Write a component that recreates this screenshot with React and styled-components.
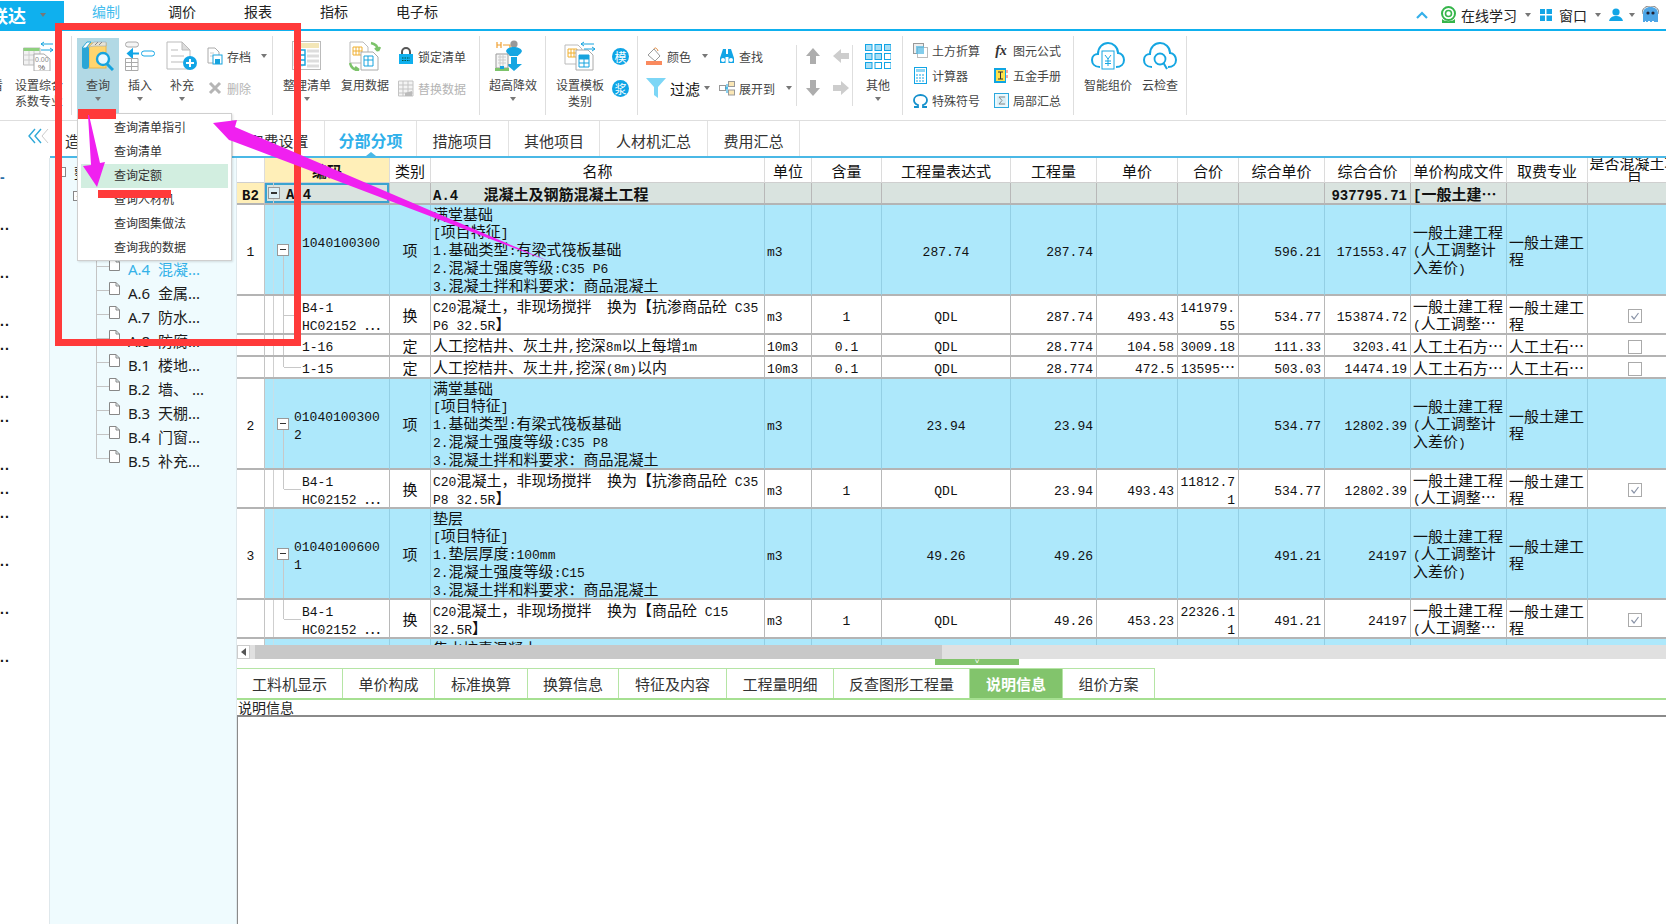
import React from "react";
import styled, { createGlobalStyle } from "styled-components";

const GlobalStyle = createGlobalStyle`
  html, body {
    margin: 0;
    padding: 0;
    background: #fff;
    overflow: hidden;
  }
  * { box-sizing: border-box; }
`;

const CJK = `"Noto Sans CJK SC", "Noto Sans", sans-serif`;
const MONO = `"Liberation Mono", "Noto Sans CJK SC", monospace`;

/* ---------- small drawings ---------- */

const QueryIcon = () => (
  <svg width="32" height="30" viewBox="0 0 32 30">
    <rect x="7" y="2" width="17" height="25" fill="#ffd56e" stroke="#eab64a" />
    <path d="M7 6 L12 1 H24 V5 H12 Z" fill="#e9e4d4" stroke="#9ab" strokeWidth=".6" />
    <path d="M13 4 L16 1 M17 4 L20 1" stroke="#888" />
    <rect x="0" y="5" width="7" height="23" rx="3" fill="#2ba6d6" />
    <path d="M0 7 L5 1 H9 L4 7 Z" fill="#fff" stroke="#2ba6d6" />
    <circle cx="21" cy="18" r="6" fill="#eaf8ff" stroke="#16a3de" strokeWidth="2.4" />
    <path d="M25 23 L31 29" stroke="#16a3de" strokeWidth="3" />
  </svg>
);

const InsertIcon = () => (
  <svg width="30" height="30" viewBox="0 0 30 30">
    <rect x=".5" y="1" width="13" height="5" rx="2.5" fill="#f4f4f4" stroke="#aaa" />
    <rect x="16.5" y="10" width="13" height="5" rx="2.5" fill="#fff" stroke="#19a8e6" />
    <path d="M14 12.5 H7 M7 9 L3 12.5 L7 16 Z" stroke="#12a5e6" strokeWidth="2" fill="#12a5e6" />
    <path d="M.5 17.5 H13 V29.5 H.5 Z M.5 21.5 H13 M.5 25.5 H13 M6.5 17.5 V29.5" fill="none" stroke="#aaa" />
  </svg>
);

const SupplementIcon = () => (
  <svg width="32" height="30" viewBox="0 0 32 30">
    <path d="M1 1 H16 L24 9 V28 H1 Z" fill="#fff" stroke="#bbb" />
    <path d="M16 1 V9 H24 Z" fill="#ddd" stroke="#bbb" />
    <path d="M5 9 H12 M5 15 H18 M5 21 H18" stroke="#ddd" strokeWidth="2" />
    <circle cx="24" cy="22" r="7" fill="#12a5e6" />
    <path d="M24 18 V26 M20 22 H28" stroke="#fff" strokeWidth="2" />
  </svg>
);

const SaveIcon = () => (
  <svg width="16" height="18" viewBox="0 0 16 18">
    <path d="M1 1 H8 L12 5 V16 H1 Z" fill="#fff" stroke="#aaa" />
    <path d="M3 6 H7 M3 9 H6" stroke="#ccc" />
    <rect x="6" y="8" width="9" height="9" fill="#fff" stroke="#16a3de" />
    <rect x="8" y="12" width="5" height="5" fill="#16a3de" />
  </svg>
);

const DeleteIcon = () => (
  <svg width="16" height="16" viewBox="0 0 16 16">
    <path d="M3 3 L13 13 M13 3 L3 13" stroke="#b5b5b5" strokeWidth="3" />
  </svg>
);

const RateIcon = () => (
  <svg width="32" height="30" viewBox="0 0 32 30">
    <path d="M.5 7 H17 V24 H.5 Z" fill="#f2f2f2" stroke="#bbb" />
    <rect x=".5" y="7" width="16" height="3" fill="#8ed07e" />
    <path d="M.5 14 H17 M.5 19 H17 M6 10 V24 M11 10 V24" stroke="#ccc" />
    <path d="M11 13 H21 L27 18 V30 H11 Z" fill="#fff" stroke="#aaa" />
    <text x="12" y="21" fontSize="7" fill="#888" fontFamily="Liberation Sans">0.00</text>
    <text x="15" y="29" fontSize="8" fill="#555" fontFamily="Liberation Sans">%</text>
    <path d="M18 3 H30 M18 3 L21 1 M18 3 L21 5 M18 9 H30 M30 9 L27 7 M30 9 L27 11" stroke="#16a3de" />
  </svg>
);

const OrganizeIcon = () => (
  <svg width="30" height="30" viewBox="0 0 30 30">
    <rect x=".5" y=".5" width="28" height="28" fill="#fff" stroke="#bbb" />
    <rect x="2" y="2" width="25" height="5" fill="#f3e6b7" />
    <path d="M2 9 H11 V25 H2 Z" fill="#fff" stroke="#ddd" />
    <path d="M7 9 H13 V14 H7 Z M7 14 H13 V19 H7 Z M7 19 H13 V24 H7 Z" fill="#fff" stroke="#16a3de" strokeWidth="1.4" />
    <path d="M15 10 H27 M15 15 H27 M15 20 H27 M15 25 H27" stroke="#ddd" strokeWidth="3" />
  </svg>
);

const ReuseIcon = () => (
  <svg width="32" height="30" viewBox="0 0 32 30">
    <path d="M1 1 H14 L19 6 V22 H1 Z" fill="#fff" stroke="#bbb" />
    <path d="M4 6 H13 V14 H4 Z M4 10 H13 M7 6 V14 M10 6 V14" fill="none" stroke="#f0b030" />
    <path d="M12 11 H24 L29 16 V29 H12 Z" fill="#fff" stroke="#aaa" />
    <path d="M15 15 H24 V25 H15 Z M15 19 H24 M19 15 V25" fill="none" stroke="#16a3de" />
    <path d="M22 2 C27 3 29 6 29 10 M29 10 L26 7 M29 10 L31 6" fill="none" stroke="#7cc36a" strokeWidth="2.4" />
    <path d="M1 22 C2 27 5 29 10 29 M10 29 L6 26 M10 29 L6 30" fill="none" stroke="#7cc36a" strokeWidth="2.4" />
  </svg>
);

const LockIcon = () => (
  <svg width="16" height="18" viewBox="0 0 16 18">
    <path d="M4 8 V5 a4 4 0 0 1 8 0 V8" fill="none" stroke="#555" strokeWidth="2" />
    <rect x="1" y="7" width="14" height="10" fill="#0fb0ee" />
    <path d="M4 11 H12 M4 13.5 H12" stroke="#054" strokeDasharray="1.5 1" />
  </svg>
);

const ReplaceIcon = () => (
  <svg width="16" height="17" viewBox="0 0 16 17">
    <path d="M.5 1 H15 V16 H.5 Z M.5 5 H15 M.5 9 H15 M.5 13 H15 M5 1 V16 M10 1 V16" fill="#f4f4f4" stroke="#c4c4c4" />
    <path d="M7 13 L14 11 L14 16 L7 16 Z" fill="#bbb" />
  </svg>
);

const HeightIcon = () => (
  <svg width="36" height="32" viewBox="0 0 36 32">
    <path d="M2 2 V8 M6 2 V8 M2 5 H6 M8 5 H15 V16" fill="none" stroke="#f0a030" strokeWidth="1.2" />
    <circle cx="19" cy="4" r="3.6" fill="#999" />
    <path d="M11 11 C12 8 16 7 19 7 C22 7 26 8 27 11 C26 14 23 15 23 16 H15 C15 15 12 14 11 11 Z" fill="#15a6e2" />
    <path d="M16 17 H22 V24 H27 L19 31 L11 24 H16 Z" fill="#15a6e2" />
    <path d="M1 14 H13 V28 H1 Z" fill="#f6f6f6" stroke="#999" />
    <path d="M3 17 H11 M3 20 H11 M3 23 H11 M5 15 V27 M8 15 V27" stroke="#ccc" />
    <rect x="0" y="28" width="14" height="3" fill="#7cc36a" />
    <rect x="5" y="26" width="4" height="3" fill="#16a3de" />
  </svg>
);

const TemplateIcon = () => (
  <svg width="32" height="30" viewBox="0 0 32 30">
    <path d="M1 4 H14 L18 8 V23 H1 Z" fill="#fff" stroke="#bbb" />
    <path d="M4 8 H13 V16 H4 Z M4 12 H13 M7 8 V16 M10 8 V16" fill="none" stroke="#f0b030" />
    <path d="M12 9 H24 L29 14 V29 H12 Z" fill="#fff" stroke="#aaa" />
    <path d="M15 14 H25 V26 H15 Z M15 18 H25 M15 22 H25 M20 14 V26" fill="none" stroke="#16a3de" />
    <rect x="15" y="14" width="10" height="4" fill="#16a3de" />
    <path d="M17 3 H30 M17 3 L20 1 M17 3 L20 5 M20 8 H31 M31 8 L28 6 M31 8 L28 10" stroke="#16a3de" />
  </svg>
);

const PaintIcon = () => (
  <svg width="17" height="18" viewBox="0 0 17 18">
    <path d="M2 8 L8 2 L14 9 L9 14 Z" fill="#fff" stroke="#999" />
    <path d="M8 2 C9 0 11 1 12 4" fill="none" stroke="#e08a40" />
    <rect x="0" y="14" width="16" height="4" fill="#fa8a5e" />
  </svg>
);

const FindIcon = () => (
  <svg width="16" height="16" viewBox="0 0 16 16">
    <path d="M4 1 H7 V6 H9 V1 H12 L15 10 V15 H9.5 V9 H6.5 V15 H1 V10 Z" fill="#12a5e6" />
    <circle cx="4" cy="12" r="2" fill="#fff" />
    <circle cx="12" cy="12" r="2" fill="#fff" />
  </svg>
);

const FunnelIcon = () => (
  <svg width="20" height="20" viewBox="0 0 20 20">
    <path d="M0 0 H20 L12 9 V20 L8 17 V9 Z" fill="#7dd6f6" />
  </svg>
);

const ExpandIcon = () => (
  <svg width="16" height="15" viewBox="0 0 16 15">
    <rect x=".5" y="4.5" width="6" height="5" fill="#fff" stroke="#999" />
    <rect x="9.5" y=".5" width="6" height="5" fill="#fbe7b5" stroke="#999" />
    <rect x="9.5" y="9" width="6" height="5" fill="#fbe7b5" stroke="#999" />
    <path d="M6 7 H9 M8 3 V12" stroke="#16a3de" />
  </svg>
);

const ROTATE = { up: 0, right: 90, down: 180, left: 270 };
const BlockArrow = ({ dir, color }) => (
  <svg width="16" height="16" viewBox="0 0 16 16">
    <path
      d="M8 0 L15 8 H11 V16 H5 V8 H1 Z"
      fill={color}
      transform={`rotate(${ROTATE[dir]} 8 8)`}
    />
  </svg>
);

const MoreIcon = () => (
  <svg width="26" height="25" viewBox="0 0 26 25">
    {[0, 1, 2].map((r) =>
      [0, 1, 2].map((c) => (
        <rect
          key={`${r}-${c}`}
          x={c * 9.5 + 0.5}
          y={r * 9 + 0.5}
          width="6.5"
          height="6"
          fill={r === 1 && c === 2 || r === 2 && c > 0 ? "#fff" : "#a8def5"}
          stroke="#12a5e6"
        />
      ))
    )}
  </svg>
);

const EarthIcon = () => (
  <svg width="15" height="15" viewBox="0 0 15 15">
    <rect x=".5" y=".5" width="10" height="10" fill="#eee" stroke="#999" />
    <rect x="4.5" y="4.5" width="10" height="10" fill="#fff" stroke="#bbb" />
    <rect x="3" y="3" width="8" height="8" fill="#4fb8e4" opacity=".7" />
  </svg>
);

const CalcIcon = () => (
  <svg width="13" height="17" viewBox="0 0 13 17">
    <rect x=".5" y=".5" width="12" height="16" fill="#fff" stroke="#12a5e6" />
    <rect x="2" y="2" width="9" height="3" fill="#8fd6f4" />
    <path d="M2 8 H11 M2 11 H11 M2 14 H11" stroke="#12a5e6" strokeDasharray="2 1" />
  </svg>
);

const OmegaIcon = () => (
  <svg width="15" height="14" viewBox="0 0 15 14">
    <path
      d="M1 13 H5 V11 C2 10 1 8 1 6 C1 3 4 1 7.5 1 C11 1 14 3 14 6 C14 8 13 10 10 11 V13 H14"
      fill="none"
      stroke="#1590cc"
      strokeWidth="1.8"
    />
  </svg>
);

const HandbookIcon = () => (
  <svg width="14" height="15" viewBox="0 0 14 15">
    <rect x="0" y="0" width="12" height="15" fill="#0fa5e2" />
    <rect x="2" y="2" width="9" height="11" fill="#ffe24a" />
    <path d="M4 4 H9 M6.5 4 V11 M4 11 H9" stroke="#333" />
    <path d="M13 2 V5 M13 7 V10" stroke="#e55" />
  </svg>
);

const SumIcon = () => (
  <svg width="15" height="15" viewBox="0 0 15 15">
    <rect x=".5" y=".5" width="14" height="14" fill="#eaf8fd" stroke="#2aa8de" />
    <rect x="3" y="3" width="9" height="9" fill="#d8eef6" />
    <path d="M11 4 H5 L8 7.5 L5 11 H11" fill="none" stroke="#888" />
  </svg>
);

const CloudPath = "M9 26 C3 26 1 22 1 19 C1 15 4 13 7 13 C7 6 12 2 17 2 C22 2 27 6 27 12 C31 12 33 16 33 19 C33 23 30 26 25 26";

const CloudPriceIcon = () => (
  <svg width="34" height="30" viewBox="0 0 34 30">
    <path d={CloudPath} fill="none" stroke="#15a6e2" strokeWidth="2" />
    <rect x="11" y="10" width="12" height="18" fill="#fff" stroke="#15a6e2" />
    <path d="M14 14 L17 18 L20 14 M17 18 V25 M14 20 H20 M14 22.5 H20" fill="none" stroke="#15a6e2" />
  </svg>
);

const CloudCheckIcon = () => (
  <svg width="34" height="30" viewBox="0 0 34 30">
    <path d={CloudPath} fill="none" stroke="#15a6e2" strokeWidth="2" />
    <circle cx="17" cy="18" r="5.5" fill="#fff" stroke="#15a6e2" strokeWidth="1.8" />
    <path d="M20.5 22 L24 28" stroke="#15a6e2" strokeWidth="2" />
  </svg>
);

const HeadsetIcon = () => (
  <svg width="17" height="17" viewBox="0 0 17 17">
    <circle cx="8.5" cy="7.5" r="6.5" fill="none" stroke="#35b54a" strokeWidth="2" />
    <circle cx="8.5" cy="7.5" r="3" fill="none" stroke="#35b54a" strokeWidth="1.6" />
    <path d="M2 13 C5 16 12 16 15 13 L15 17 H2 Z" fill="#35b54a" />
  </svg>
);

const WindowsIcon = () => (
  <svg width="12" height="12" viewBox="0 0 12 12">
    <path d="M0 0 H5 V5 H0 Z M6.5 0 H12 V5 H6.5 Z M0 6.5 H5 V12 H0 Z M6.5 6.5 H12 V12 H6.5 Z" fill="#12a5e6" />
  </svg>
);

const UserIcon = () => (
  <svg width="14" height="13" viewBox="0 0 14 13">
    <circle cx="7" cy="4" r="3.6" fill="#12a5e6" />
    <path d="M0 13 C1 9 4 8 7 8 C10 8 13 9 14 13 Z" fill="#12a5e6" />
  </svg>
);

const AvatarIcon = () => (
  <svg width="17" height="17" viewBox="0 0 17 17">
    <path d="M1 8 C1 3 4 1 8.5 1 C13 1 16 3 16 8 V16 H1 Z" fill="#4ea6e6" />
    <path d="M0 8 C0 2 4 0 8.5 0 C13 0 17 2 17 8" fill="none" stroke="#777" />
    <circle cx="6" cy="7" r="1.6" fill="#223" />
    <circle cx="11" cy="7" r="1.6" fill="#223" />
    <path d="M3 15 L5 17 L7 15 L9 17 L11 15 L13 17" fill="none" stroke="#fff" />
  </svg>
);

const ChevronUp = () => (
  <svg width="12" height="8" viewBox="0 0 12 8">
    <path d="M1 7 L6 2 L11 7" fill="none" stroke="#35b0ea" strokeWidth="2.2" />
  </svg>
);

const DoubleLeft = () => (
  <svg width="22" height="16" viewBox="0 0 22 16">
    <path d="M8 1 L2 8 L8 15 M14 1 L8 8 L14 15" fill="none" stroke="#2ea8d8" strokeWidth="1.4" />
    <path d="M21 1 L15 8 L21 15" fill="none" stroke="#ccc" />
  </svg>
);

const DocLeaf = () => (
  <svg width="11" height="13" viewBox="0 0 11 13">
    <path d="M.5 .5 H7 L10.5 4 V12.5 H.5 Z M7 .5 V4 H10.5" fill="#fff" stroke="#888" />
  </svg>
);

/* ---------- top bar ---------- */

const TopBar = styled.header`
  display: flex;
  height: 31px;
  border-bottom: 2px solid #0fb0ee;
  font-family: ${CJK};
`;

const Logo = styled.div`
  display: flex;
  align-items: center;
  justify-content: flex-end;
  width: 64px;
  margin-top: 1px;
  padding-right: 18px;
  background: #0fb0ee;
  color: #fff;
  font-size: 18px;
  font-weight: 700;
  overflow: hidden;
  white-space: nowrap;
`;

const LogoName = styled.span`
  flex: none;
  margin-right: 14px;
`;

const MenuTab = styled.div`
  display: flex;
  align-items: center;
  justify-content: center;
  width: ${(p) => p.$w}px;
  height: 22px;
  font-size: 14px;
  color: ${(p) => (p.$active ? "#45bdee" : "#222")};
`;

const MenuTabs = styled.nav`
  display: flex;
  margin-left: 4px;
`;

const TopRight = styled.div`
  display: flex;
  align-items: center;
  height: 29px;
  margin-left: auto;
  padding-right: 7px;
  font-size: 14px;
  color: #222;
`;

const TopItem = styled.span`
  display: inline-flex;
  align-items: center;
  margin-left: ${(p) => p.$ml || 0}px;
`;

const Caret = styled.i`
  display: inline-block;
  flex: none;
  width: 0;
  height: 0;
  margin-left: ${(p) => p.$ml || 0}px;
  border-left: 3.5px solid transparent;
  border-right: 3.5px solid transparent;
  border-top: 4px solid #777;
`;

/* ---------- ribbon ---------- */

const Ribbon = styled.section`
  display: flex;
  height: 90px;
  border-bottom: 1px solid #dedede;
  font-family: ${CJK};
  font-size: 12px;
  color: #444;
`;

const Group = styled.div`
  display: flex;
  flex: none;
  width: ${(p) => p.$w}px;
  height: 79px;
  margin-top: 5px;
  padding-left: ${(p) => p.$pl || 0}px;
  border-right: 1px solid #dedede;
  overflow: hidden;
`;

const ClippedLabel = styled.div`
  flex: none;
  width: 24px;
  margin-left: -21px;
  padding-top: 41px;
  line-height: 16px;
  white-space: nowrap;
`;

const BigButton = styled.div`
  display: flex;
  flex: none;
  flex-direction: column;
  align-items: center;
  width: ${(p) => p.$w}px;
  height: 77px;
  margin-top: 2px;
  padding-top: 3px;
  background: ${(p) => (p.$active ? "#b2d9e5" : "transparent")};
`;

const BigIcon = styled.div`
  display: flex;
  align-items: center;
  justify-content: center;
  height: 30px;
`;

const BigLabel = styled.div`
  margin-top: 6px;
  line-height: 16px;
  text-align: center;
  white-space: pre;
`;

const BigCaret = styled(Caret)`
  margin-top: 4px;
`;

const ItemColumn = styled.div`
  display: flex;
  flex: none;
  flex-direction: column;
  gap: 12px;
  padding-top: 10px;
  padding-left: ${(p) => p.$pl || 0}px;
`;

const ToolItem = styled.div`
  display: flex;
  align-items: center;
  gap: ${(p) => (p.$gap === undefined ? 4 : p.$gap)}px;
  height: 20px;
  white-space: nowrap;
  color: ${(p) => (p.$muted ? "#b4b4b4" : "#444")};
`;

const ItemIcon = styled.span`
  display: inline-flex;
  flex: none;
  align-items: center;
  justify-content: center;
  width: ${(p) => p.$w || 16}px;
`;

const FxMark = styled.span`
  font-family: "Liberation Serif", serif;
  font-size: 14px;
  font-style: italic;
  font-weight: 700;
  color: #333;
`;

const FilterLabel = styled.span`
  font-size: 15px;
  color: #111;
`;

const Coin = styled.span`
  display: flex;
  align-items: center;
  justify-content: center;
  width: 17px;
  height: 17px;
  border-radius: 50%;
  background: #0fa5e6;
  color: #fff;
  font-size: 12px;
`;

const FilterGrid = styled.div`
  display: grid;
  flex: none;
  grid-template-columns: 73px 77px;
  grid-auto-rows: 20px;
  row-gap: 12px;
  width: 150px;
  padding-top: 10px;
`;

const ArrowPad = styled.div`
  display: grid;
  flex: none;
  grid-template-columns: 30px 25px;
  grid-auto-rows: 20px;
  row-gap: 12px;
  align-content: start;
  justify-items: center;
  align-items: center;
  width: 57px;
  height: 61px;
  margin-top: 9px;
  padding: 1px 0 0 1px;
  border-left: 1px solid #dedede;
  border-right: 1px solid #dedede;
`;

const MiniGrid = styled.div`
  display: grid;
  grid-template-columns: 81px 80px;
  grid-auto-rows: 25px;
  align-items: center;
  padding: 2px 0 0 8px;
`;

/* ---------- workspace ---------- */

const Body = styled.div`
  display: flex;
  height: 803px;
`;

const Rail = styled.aside`
  flex: none;
  width: 49px;
  padding-top: 7px;
  font-family: "Liberation Sans", sans-serif;
`;

const CollapseBtn = styled.div`
  display: flex;
  justify-content: flex-end;
  height: 38px;
`;

const RailDot = styled.div`
  height: 24px;
  line-height: 22px;
  font-size: 14px;
  font-weight: 700;
  letter-spacing: 1px;
  color: ${(p) => (p.$blue ? "#2a6fa8" : "#111")};
  overflow: hidden;
`;

const Work = styled.div`
  display: flex;
  flex: 1;
  flex-direction: column;
  min-width: 0;
`;

const SubTabs = styled.div`
  display: flex;
  flex: none;
  height: 37px;
  margin-left: 1px;
  border-bottom: 2px solid #4ab8e6;
  font-family: ${CJK};
`;

const SubTab = styled.div`
  position: relative;
  display: flex;
  align-items: center;
  justify-content: center;
  width: ${(p) => p.$w}px;
  padding-top: 3px;
  font-size: ${(p) => (p.$active ? 16 : 15)}px;
  font-weight: ${(p) => (p.$active ? 700 : 400)};
  color: ${(p) => (p.$active ? "#2fb0ea" : "#333")};
  border-right: 1px solid #e2e2e2;
  ${(p) =>
    p.$active &&
    `&::after {
      content: "";
      position: absolute;
      left: 50%;
      bottom: 0;
      margin-left: -5px;
      border-left: 5px solid transparent;
      border-right: 5px solid transparent;
      border-bottom: 4px solid #4ab8e6;
    }`}
`;

const Split = styled.div`
  display: flex;
  flex: 1;
  min-height: 0;
`;

const TreePanel = styled.nav`
  flex: none;
  width: 188px;
  padding-top: 2px;
  background: #effbfe;
  border-left: 1px solid #dfe8ec;
  border-right: 1px solid #dfe8ec;
  font-family: "Noto Sans", "Noto Sans CJK SC", sans-serif;
  font-size: 15px;
  color: #1c1c1c;
`;

const TreeRoot = styled.div`
  display: flex;
  align-items: center;
  gap: 2px;
  height: 24px;
  padding-left: ${(p) => p.$pl}px;
  white-space: nowrap;
  overflow: hidden;
`;

const RootBox = styled.span`
  display: inline-flex;
  align-items: center;
  justify-content: center;
  flex: none;
  width: 10px;
  height: 10px;
  margin-right: 6px;
  border: 1px solid #888;
  background: #fff;
  font: 10px/8px "Liberation Sans", sans-serif;
  color: #3aa;
`;

const TreeLeaf = styled.div`
  position: relative;
  display: flex;
  align-items: center;
  height: 24px;
  padding-left: 59px;
  white-space: pre;
  color: ${(p) => (p.$active ? "#35b2e8" : "#1c1c1c")};
  &::before {
    content: "";
    position: absolute;
    left: 46px;
    top: 0;
    width: 1px;
    height: ${(p) => (p.$last ? "10px" : "100%")};
    background: #c4c4c4;
  }
  &::after {
    content: "";
    position: absolute;
    left: 46px;
    top: 10px;
    width: 13px;
    height: 1px;
    background: #c4c4c4;
  }
`;

const LeafIcon = styled.span`
  display: inline-flex;
  flex: none;
  width: 19px;
  margin-top: -7px;
`;

const Main = styled.main`
  display: flex;
  flex: 1;
  flex-direction: column;
  min-width: 0;
`;

const GridWrap = styled.div`
  flex: none;
  height: 487px;
  overflow: hidden;
`;

const Latin = styled.span`
  font-family: ${MONO};
  font-size: 13px;
  line-height: 1;
`;

const Sheet = styled.table`
  width: 1445px;
  table-layout: fixed;
  border-collapse: separate;
  border-spacing: 0;
  font-family: ${CJK};
  font-size: 15px;
  color: #111;
`;

const Col = styled.col`
  width: ${(p) => p.$w}px;
`;

const HeadCell = styled.th`
  height: 25px;
  padding: 0;
  font-weight: ${(p) => (p.$strong ? 700 : 400)};
  background: ${(p) => (p.$bg ? p.$bg : "#fff")};
  border-right: 1px solid #dcdcdc;
  border-bottom: 1px solid #cfcfcf;
`;

const HeadClip = styled.div`
  display: flex;
  align-items: center;
  justify-content: center;
  height: 24px;
  line-height: 15px;
  white-space: pre;
  overflow: hidden;
`;

const ROW_BG = { group: "#d9e3df", item: "#ade8fb", sub: "#fff" };

const Row = styled.tr`
  height: ${(p) => p.$h}px;
  background: ${(p) => ROW_BG[p.$kind]};
  font-weight: ${(p) => (p.$kind === "group" ? 700 : 400)};
  ${Latin} {
    font-size: ${(p) => (p.$kind === "group" ? 14 : 13)}px;
  }
`;

const Cell = styled.td`
  position: relative;
  padding: ${(p) => (p.$kind === "group" ? 2 : 0)}px ${(p) => (p.$align === "right" ? 3 : 2)}px 0 2px;
  line-height: 17px;
  text-align: ${(p) => p.$align || "left"};
  white-space: pre;
  overflow: hidden;
  border-right: 1px solid ${(p) => (p.$kind === "item" ? "#93cfe4" : "#b8b8b8")};
  border-bottom: 2px solid #b4b4b4;
`;

const NumCell = styled(Cell)`
  text-align: center;
  padding: ${(p) => (p.$kind === "group" ? 2 : 0)}px 0 0;
  background: ${(p) => (p.$kind === "group" ? "#ffefb8" : "#fff")};
  border-right: 1px solid #c4c4c4;
`;

const CodeCell = styled(Cell)`
  padding: 0 0 0 ${(p) => p.$pl}px;
  box-shadow: ${(p) => (p.$selected ? "inset 0 0 0 2px #3aa3d0" : "none")};
  &::before {
    content: "";
    position: absolute;
    left: 8px;
    top: 0;
    bottom: 0;
    width: 1px;
    background: ${(p) => (p.$kind === "item" ? "#c7dfe8" : "#cfcfcf")};
  }
`;

const CodeLine = styled.div`
  display: flex;
  align-items: center;
  gap: ${(p) => p.$gap}px;
`;

const FoldBox = styled.span`
  position: relative;
  z-index: 1;
  flex: none;
  width: 12px;
  height: 12px;
  border: 1px solid #999;
  background: ${(p) => (p.$tint ? "#dcefF6" : "#fff")};
  &::after {
    content: "";
    position: absolute;
    left: 2px;
    right: 2px;
    top: 4px;
    height: 1.5px;
    background: #333;
  }
`;

/* tree links drawn over the code cell */
const LinkDown = styled.i`
  position: absolute;
  left: 18px;
  top: 50%;
  bottom: 0;
  width: 1px;
  background: #c8c8c8;
`;

const LinkElbow = styled.i`
  position: absolute;
  left: 18px;
  top: 0;
  width: 18px;
  height: ${(p) => (p.$through ? "100%" : "50%")};
  border-left: 1px solid #c8c8c8;
  &::after {
    content: "";
    position: absolute;
    left: 0;
    right: 0;
    top: ${(p) => (p.$through ? "50%" : "100%")};
    height: 1px;
    background: #c8c8c8;
  }
`;

const CheckBox = styled.span`
  display: inline-flex;
  align-items: center;
  justify-content: center;
  width: 14px;
  height: 14px;
  vertical-align: middle;
  background: #fff;
  border: 1px solid #aaa;
`;

const Scrollbar = styled.div`
  display: flex;
  flex: none;
  height: 14px;
  background: #e0e0e0;
`;

const ScrollArrow = styled.div`
  display: flex;
  align-items: center;
  justify-content: center;
  flex: none;
  width: 13px;
  margin-right: 5px;
  background: #fff;
  border: 1px solid #ccc;
  &::before {
    content: "";
    border-top: 4px solid transparent;
    border-bottom: 4px solid transparent;
    border-right: 5px solid #555;
  }
`;

const ScrollThumb = styled.div`
  flex: none;
  width: 687px;
  background: #c8c8c8;
`;

const GripRow = styled.div`
  display: flex;
  flex: none;
  justify-content: flex-start;
  height: 9px;
  padding-left: 698px;
`;

const Grip = styled.div`
  display: flex;
  justify-content: center;
  width: 84px;
  height: 6px;
  background: #82c46c;
  color: #fff;
  font: 8px/6px "Liberation Sans", sans-serif;
`;

const DetailTabs = styled.div`
  display: flex;
  flex: none;
  height: 32px;
  border-bottom: 2px solid #a6e092;
  font-family: ${CJK};
`;

const DetailTab = styled.div`
  display: flex;
  align-items: center;
  justify-content: center;
  width: ${(p) => p.$w}px;
  font-size: 15px;
  font-weight: ${(p) => (p.$active ? 700 : 400)};
  color: ${(p) => (p.$active ? "#fff" : "#333")};
  background: ${(p) => (p.$active ? "#82c46c" : "#fff")};
  border-top: 1px solid #b5e5a5;
  border-right: 1px solid #b5e5a5;
`;

const InfoLabel = styled.div`
  flex: none;
  height: 15px;
  padding-left: 1px;
  line-height: 14px;
  font-family: ${CJK};
  font-size: 14px;
  color: #222;
`;

const InfoBody = styled.div`
  flex: 1;
  border-top: 2px solid #8a8a8a;
  border-left: 1px solid #8a8a8a;
  background: #fff;
`;

/* ---------- things lying over the window ---------- */

const Page = styled.div`
  position: relative;
  width: 1666px;
  height: 924px;
  overflow: hidden;
  background: #fff;
`;

const QueryMenu = styled.div`
  position: absolute;
  left: 77px;
  top: 113px;
  width: 155px;
  height: 148px;
  padding: 2px 3px 0;
  background: #fff;
  border: 1px solid #cfcfcf;
  box-shadow: 1px 1px 2px rgba(0, 0, 0, 0.12);
  font-family: ${CJK};
  font-size: 12px;
  color: #333;
`;

const QueryItem = styled.div`
  height: 24px;
  padding-left: 33px;
  line-height: 22px;
  background: ${(p) => (p.$hot ? "#d2eee0" : "transparent")};
`;

const RedFrame = styled.div`
  position: absolute;
  left: 55px;
  top: 23px;
  width: 246px;
  height: 323px;
  border: 7px solid #ff3a3a;
`;

const RedBar = styled.div`
  position: absolute;
  left: ${(p) => p.$x}px;
  top: ${(p) => p.$y}px;
  width: ${(p) => p.$w}px;
  height: ${(p) => p.$h}px;
  background: #ff3a3a;
`;

const ArrowLayer = styled.svg`
  position: absolute;
  left: 0;
  top: 0;
  pointer-events: none;
`;

/* ---------- data ---------- */

const COLS = [28, 125, 41, 334, 47, 70, 129, 86, 81, 61, 86, 86, 96, 81, 94];

const HEADS = ["", "编码", "类别", "名称", "单位", "含量", "工程量表达式", "工程量", "单价", "合价", "综合单价", "综合合价", "单价构成文件", "取费专业", "是否混凝土项\n目"];

const FILE_TEXT = "一般土建工程\n(人工调整计\n入差价)";
const FILE_SHORT = "一般土建工程\n(人工调整⋯";
const SPEC_TEXT = "一般土建工\n程";

const ROWS = [
  {
    kind: "group", h: 22, no: "B2", code: "A.4", type: "", name: "A.4   混凝土及钢筋混凝土工程",
    cells: ["", "", "", "", "", "", "", "937795.71", "[一般土建⋯", ""],
  },
  {
    kind: "item", h: 90, no: "1", code: "1040100300\n\u00a0", gap: 13, type: "项",
    name: "满堂基础\n[项目特征]\n1.基础类型:有梁式筏板基础\n2.混凝土强度等级:C35 P6\n3.混凝土拌和料要求：商品混凝土",
    cells: ["m3", "", "287.74", "287.74", "", "", "596.21", "171553.47", FILE_TEXT, SPEC_TEXT],
  },
  {
    kind: "sub", h: 39, through: true, code: "B4-1\nHC02152 ⋯", type: "换",
    name: "C20混凝土，非现场搅拌  换为【抗渗商品砼 C35\nP6 32.5R】",
    cells: ["m3", "1", "QDL", "287.74", "493.43", "141979.\n55", "534.77", "153874.72", FILE_SHORT, SPEC_TEXT], check: "on",
  },
  {
    kind: "sub", h: 22, through: true, code: "1-16", type: "定", name: "人工挖桔井、灰土井,挖深8m以上每增1m",
    cells: ["10m3", "0.1", "QDL", "28.774", "104.58", "3009.18", "111.33", "3203.41", "人工土石方⋯", "人工土石⋯"], check: "off",
  },
  {
    kind: "sub", h: 22, code: "1-15", type: "定", name: "人工挖桔井、灰土井,挖深(8m)以内",
    cells: ["10m3", "0.1", "QDL", "28.774", "472.5", "13595⋯", "503.03", "14474.19", "人工土石方⋯", "人工土石⋯"], check: "off",
  },
  {
    kind: "item", h: 90, no: "2", code: "01040100300\n2", gap: 5, type: "项",
    name: "满堂基础\n[项目特征]\n1.基础类型:有梁式筏板基础\n2.混凝土强度等级:C35 P8\n3.混凝土拌和料要求：商品混凝土",
    cells: ["m3", "", "23.94", "23.94", "", "", "534.77", "12802.39", FILE_TEXT, SPEC_TEXT],
  },
  {
    kind: "sub", h: 39, code: "B4-1\nHC02152 ⋯", type: "换",
    name: "C20混凝土，非现场搅拌  换为【抗渗商品砼 C35\nP8 32.5R】",
    cells: ["m3", "1", "QDL", "23.94", "493.43", "11812.7\n1", "534.77", "12802.39", FILE_SHORT, SPEC_TEXT], check: "on",
  },
  {
    kind: "item", h: 90, no: "3", code: "01040100600\n1", gap: 5, type: "项",
    name: "垫层\n[项目特征]\n1.垫层厚度:100mm\n2.混凝土强度等级:C15\n3.混凝土拌和料要求：商品混凝土",
    cells: ["m3", "", "49.26", "49.26", "", "", "491.21", "24197", FILE_TEXT, SPEC_TEXT],
  },
  {
    kind: "sub", h: 39, code: "B4-1\nHC02152 ⋯", type: "换",
    name: "C20混凝土，非现场搅拌  换为【商品砼 C15\n32.5R】",
    cells: ["m3", "1", "QDL", "49.26", "453.23", "22326.1\n1", "491.21", "24197", FILE_SHORT, SPEC_TEXT], check: "on",
  },
  {
    kind: "item", h: 90, no: "4", code: "01040100600\n2", gap: 5, type: "项",
    name: "集水坑素混凝土\n[项目特征]\n1.垫层厚度:100mm\n2.混凝土强度等级:C15\n3.混凝土拌和料要求：商品混凝土",
    cells: ["m3", "", "", "", "", "", "", "", "", ""],
  },
];

// column alignment for the cells after 名称
const ALIGN = ["left", "center", "center", "right", "right", "right", "right", "right", "left", "left"];

const LEAVES = [
  { label: "A.4  混凝...", active: true },
  { label: "A.6  金属..." },
  { label: "A.7  防水..." },
  { label: "A.8  防腐..." },
  { label: "B.1  楼地..." },
  { label: "B.2  墙、 ..." },
  { label: "B.3  天棚..." },
  { label: "B.4  门窗..." },
  { label: "B.5  补充...", last: true },
];

const RAIL = [1, 0, 1, 0, 1, 0, 1, 1, 0, 1, 1, 0, 1, 1, 1, 0, 1, 0, 1, 0, 1];

// latin runs get the narrow face, the grid's font has half-width latin
const Txt = ({ children }) =>
  String(children)
    .split(/([\x20-\x7e]+)/)
    .map((part, i) => (i % 2 ? <Latin key={i}>{part}</Latin> : part));

const CheckMark = () => (
  <svg width="10" height="10" viewBox="0 0 10 10">
    <path d="M1.5 5 L4 8 L8.5 2" fill="none" stroke="#8a94a8" strokeWidth="1.2" />
  </svg>
);

const GridRow = ({ row }) => {
  const { kind } = row;
  return (
    <Row $kind={kind} $h={row.h}>
      <NumCell $kind={kind}><Txt>{row.no || ""}</Txt></NumCell>
      {kind === "sub" ? (
        <CodeCell $kind={kind} $pl={37}>
          <LinkElbow $through={row.through} />
          <Txt>{row.code}</Txt>
        </CodeCell>
      ) : (
        <CodeCell $kind={kind} $pl={kind === "group" ? 3 : 12} $selected={kind === "group"}>
          {kind === "item" && <LinkDown />}
          <CodeLine $gap={kind === "group" ? 6 : row.gap}>
            <FoldBox $tint={kind === "group"} />
            <span><Txt>{row.code}</Txt></span>
          </CodeLine>
        </CodeCell>
      )}
      <Cell $kind={kind} $align="center"><Txt>{row.type}</Txt></Cell>
      <Cell $kind={kind}><Txt>{row.name}</Txt></Cell>
      {row.cells.map((c, i) => (
        <Cell key={i} $kind={kind} $align={ALIGN[i]}><Txt>{c}</Txt></Cell>
      ))}
      <Cell $kind={kind} $align="center">
        {row.check && <CheckBox>{row.check === "on" && <CheckMark />}</CheckBox>}
      </Cell>
    </Row>
  );
};

export default function App() {
  return (
    <Page>
      <GlobalStyle />
      <TopBar>
        <Logo>
          <LogoName>联达</LogoName>
          <Caret />
        </Logo>
        <MenuTabs>
          <MenuTab $w={76} $active>编制</MenuTab>
          <MenuTab $w={76}>调价</MenuTab>
          <MenuTab $w={76}>报表</MenuTab>
          <MenuTab $w={76}>指标</MenuTab>
          <MenuTab $w={90}>电子标</MenuTab>
        </MenuTabs>
        <TopRight>
          <ChevronUp />
          <TopItem $ml={12}><HeadsetIcon /></TopItem>
          <TopItem $ml={4}>在线学习</TopItem>
          <Caret $ml={8} />
          <TopItem $ml={9}><WindowsIcon /></TopItem>
          <TopItem $ml={7}>窗口</TopItem>
          <Caret $ml={8} />
          <TopItem $ml={8}><UserIcon /></TopItem>
          <Caret $ml={6} />
          <TopItem $ml={7}><AvatarIcon /></TopItem>
        </TopRight>
      </TopBar>

      <Ribbon>
        <Group $w={72}>
          <ClippedLabel>查看</ClippedLabel>
          <BigButton $w={72}>
            <BigIcon><RateIcon /></BigIcon>
            <BigLabel>{"设置综合\n系数专业"}</BigLabel>
          </BigButton>
        </Group>
        <Group $w={201} $pl={5}>
          <BigButton $w={42} $active>
            <BigIcon><QueryIcon /></BigIcon>
            <BigLabel>查询</BigLabel>
            <BigCaret />
          </BigButton>
          <BigButton $w={42}>
            <BigIcon><InsertIcon /></BigIcon>
            <BigLabel>插入</BigLabel>
            <BigCaret />
          </BigButton>
          <BigButton $w={42}>
            <BigIcon><SupplementIcon /></BigIcon>
            <BigLabel>补充</BigLabel>
            <BigCaret />
          </BigButton>
          <ItemColumn $pl={4}>
            <ToolItem>
              <ItemIcon><SaveIcon /></ItemIcon>存档<Caret $ml={6} />
            </ToolItem>
            <ToolItem $muted>
              <ItemIcon><DeleteIcon /></ItemIcon>删除
            </ToolItem>
          </ItemColumn>
        </Group>
        <Group $w={207} $pl={7}>
          <BigButton $w={54}>
            <BigIcon><OrganizeIcon /></BigIcon>
            <BigLabel>整理清单</BigLabel>
            <BigCaret />
          </BigButton>
          <BigButton $w={62}>
            <BigIcon><ReuseIcon /></BigIcon>
            <BigLabel>复用数据</BigLabel>
          </BigButton>
          <ItemColumn $pl={2}>
            <ToolItem>
              <ItemIcon><LockIcon /></ItemIcon>锁定清单
            </ToolItem>
            <ToolItem $muted>
              <ItemIcon><ReplaceIcon /></ItemIcon>替换数据
            </ToolItem>
          </ItemColumn>
        </Group>
        <Group $w={66}>
          <BigButton $w={66}>
            <BigIcon><HeightIcon /></BigIcon>
            <BigLabel>超高降效</BigLabel>
            <BigCaret />
          </BigButton>
        </Group>
        <Group $w={92} $pl={7}>
          <BigButton $w={54}>
            <BigIcon><TemplateIcon /></BigIcon>
            <BigLabel>{"设置模板\n类别"}</BigLabel>
          </BigButton>
          <ItemColumn $pl={5}>
            <ToolItem><Coin>模</Coin></ToolItem>
            <ToolItem><Coin>浆</Coin></ToolItem>
          </ItemColumn>
        </Group>
        <Group $w={265} $pl={8}>
          <FilterGrid>
            <ToolItem>
              <ItemIcon $w={17}><PaintIcon /></ItemIcon>颜色<Caret $ml={7} />
            </ToolItem>
            <ToolItem>
              <ItemIcon><FindIcon /></ItemIcon>查找
            </ToolItem>
            <ToolItem>
              <ItemIcon $w={20}><FunnelIcon /></ItemIcon>
              <FilterLabel>过滤</FilterLabel>
              <Caret />
            </ToolItem>
            <ToolItem>
              <ItemIcon><ExpandIcon /></ItemIcon>展开到<Caret $ml={7} />
            </ToolItem>
          </FilterGrid>
          <ArrowPad>
            <BlockArrow dir="up" color="#adadad" />
            <BlockArrow dir="left" color="#cdcdcd" />
            <BlockArrow dir="down" color="#adadad" />
            <BlockArrow dir="right" color="#cdcdcd" />
          </ArrowPad>
          <BigButton $w={50}>
            <BigIcon><MoreIcon /></BigIcon>
            <BigLabel>其他</BigLabel>
            <BigCaret />
          </BigButton>
        </Group>
        <Group $w={171}>
          <MiniGrid>
            <ToolItem $gap={3}><ItemIcon $w={18}><EarthIcon /></ItemIcon>土方折算</ToolItem>
            <ToolItem $gap={3}><ItemIcon $w={18}><FxMark>fx</FxMark></ItemIcon>图元公式</ToolItem>
            <ToolItem $gap={3}><ItemIcon $w={18}><CalcIcon /></ItemIcon>计算器</ToolItem>
            <ToolItem $gap={3}><ItemIcon $w={18}><HandbookIcon /></ItemIcon>五金手册</ToolItem>
            <ToolItem $gap={3}><ItemIcon $w={18}><OmegaIcon /></ItemIcon>特殊符号</ToolItem>
            <ToolItem $gap={3}><ItemIcon $w={18}><SumIcon /></ItemIcon>局部汇总</ToolItem>
          </MiniGrid>
        </Group>
        <Group $w={113} $pl={4}>
          <BigButton $w={60}>
            <BigIcon><CloudPriceIcon /></BigIcon>
            <BigLabel>智能组价</BigLabel>
          </BigButton>
          <BigButton $w={44}>
            <BigIcon><CloudCheckIcon /></BigIcon>
            <BigLabel>云检查</BigLabel>
          </BigButton>
        </Group>
      </Ribbon>

      <Body>
        <Rail>
          <CollapseBtn><DoubleLeft /></CollapseBtn>
          {RAIL.map((on, i) => (
            <RailDot key={i} $blue={i === 0}>{on ? (i === 0 ? "-" : "..") : ""}</RailDot>
          ))}
        </Rail>
        <Work>
          <SubTabs>
            <SubTab $w={91}>造价分析</SubTab>
            <SubTab $w={92}>工程概况</SubTab>
            <SubTab $w={92}>取费设置</SubTab>
            <SubTab $w={92} $active>分部分项</SubTab>
            <SubTab $w={92}>措施项目</SubTab>
            <SubTab $w={91}>其他项目</SubTab>
            <SubTab $w={108}>人材机汇总</SubTab>
            <SubTab $w={92}>费用汇总</SubTab>
          </SubTabs>
          <Split>
            <TreePanel>
              <TreeRoot $pl={6}><RootBox />整个项目</TreeRoot>
              <TreeRoot $pl={23}><RootBox>-</RootBox>A 建筑工程</TreeRoot>
              <TreeLeaf><LeafIcon><DocLeaf /></LeafIcon>A.1  土石...</TreeLeaf>
              <TreeLeaf><LeafIcon><DocLeaf /></LeafIcon>A.3  砌筑...</TreeLeaf>
              {LEAVES.map((l) => (
                <TreeLeaf key={l.label} $active={l.active} $last={l.last}>
                  <LeafIcon><DocLeaf /></LeafIcon>
                  {l.label}
                </TreeLeaf>
              ))}
            </TreePanel>
            <Main>
              <GridWrap>
                <Sheet>
                  <colgroup>
                    {COLS.map((w, i) => <Col key={i} $w={w} />)}
                  </colgroup>
                  <thead>
                    <tr>
                      {HEADS.map((h, i) => (
                        <HeadCell key={i} $bg={i === 1 ? "#ffefb8" : ""} $strong={i === 1}>
                          <HeadClip>{h}</HeadClip>
                        </HeadCell>
                      ))}
                    </tr>
                  </thead>
                  <tbody>
                    {ROWS.map((row, i) => <GridRow key={i} row={row} />)}
                  </tbody>
                </Sheet>
              </GridWrap>
              <Scrollbar>
                <ScrollArrow />
                <ScrollThumb />
              </Scrollbar>
              <GripRow><Grip>˅</Grip></GripRow>
              <DetailTabs>
                <DetailTab $w={106}>工料机显示</DetailTab>
                <DetailTab $w={92}>单价构成</DetailTab>
                <DetailTab $w={93}>标准换算</DetailTab>
                <DetailTab $w={91}>换算信息</DetailTab>
                <DetailTab $w={108}>特征及内容</DetailTab>
                <DetailTab $w={107}>工程量明细</DetailTab>
                <DetailTab $w={136}>反查图形工程量</DetailTab>
                <DetailTab $w={93} $active>说明信息</DetailTab>
                <DetailTab $w={92}>组价方案</DetailTab>
              </DetailTabs>
              <InfoLabel>说明信息</InfoLabel>
              <InfoBody />
            </Main>
          </Split>
        </Work>
      </Body>

      <QueryMenu>
        <QueryItem>查询清单指引</QueryItem>
        <QueryItem>查询清单</QueryItem>
        <QueryItem $hot>查询定额</QueryItem>
        <QueryItem>查询人材机</QueryItem>
        <QueryItem>查询图集做法</QueryItem>
        <QueryItem>查询我的数据</QueryItem>
      </QueryMenu>
      <RedFrame />
      <RedBar $x={78} $y={109} $w={38} $h={10} />
      <RedBar $x={98} $y={190} $w={73} $h={8} />
      <ArrowLayer width="1666" height="924" viewBox="0 0 1666 924">
        <polygon points="213,123 237,120 235,127 551,262 232,141 229,140" fill="#f020f0" />
        <polygon points="88,115 89,115 100,163 105,162 97,187 83,166 91,165" fill="#f020f0" />
      </ArrowLayer>
    </Page>
  );
}
